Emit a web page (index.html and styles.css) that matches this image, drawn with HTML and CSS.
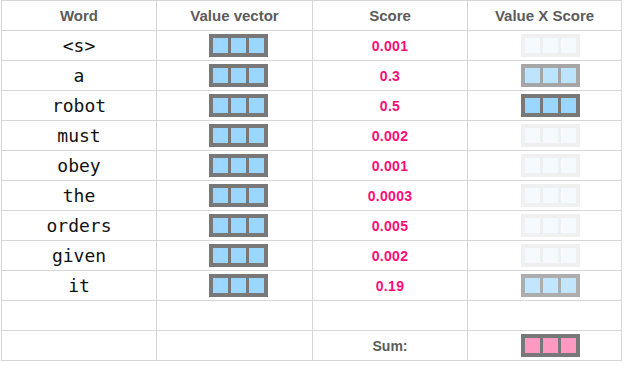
FILE: index.html
```html
<!DOCTYPE html>
<html>
<head>
<meta charset="utf-8">
<link rel="stylesheet" href="styles.css">
</head>
<body>
<div class="table">
  <div class="cell head">Word</div>
  <div class="cell head">Value vector</div>
  <div class="cell head">Score</div>
  <div class="cell head">Value X Score</div>

  <div class="cell word">&lt;s&gt;</div>
  <div class="cell vec"><div class="box"><i></i><i></i><i></i></div></div>
  <div class="cell score">0.001</div>
  <div class="cell vxs"><div class="box" style="opacity:0.1"><i></i><i></i><i></i></div></div>

  <div class="cell word">a</div>
  <div class="cell vec"><div class="box"><i></i><i></i><i></i></div></div>
  <div class="cell score">0.3</div>
  <div class="cell vxs"><div class="box" style="opacity:0.65"><i></i><i></i><i></i></div></div>

  <div class="cell word">robot</div>
  <div class="cell vec"><div class="box"><i></i><i></i><i></i></div></div>
  <div class="cell score">0.5</div>
  <div class="cell vxs"><div class="box" style="opacity:1"><i></i><i></i><i></i></div></div>

  <div class="cell word">must</div>
  <div class="cell vec"><div class="box"><i></i><i></i><i></i></div></div>
  <div class="cell score">0.002</div>
  <div class="cell vxs"><div class="box" style="opacity:0.1"><i></i><i></i><i></i></div></div>

  <div class="cell word">obey</div>
  <div class="cell vec"><div class="box"><i></i><i></i><i></i></div></div>
  <div class="cell score">0.001</div>
  <div class="cell vxs"><div class="box" style="opacity:0.1"><i></i><i></i><i></i></div></div>

  <div class="cell word">the</div>
  <div class="cell vec"><div class="box"><i></i><i></i><i></i></div></div>
  <div class="cell score">0.0003</div>
  <div class="cell vxs"><div class="box" style="opacity:0.1"><i></i><i></i><i></i></div></div>

  <div class="cell word">orders</div>
  <div class="cell vec"><div class="box"><i></i><i></i><i></i></div></div>
  <div class="cell score">0.005</div>
  <div class="cell vxs"><div class="box" style="opacity:0.1"><i></i><i></i><i></i></div></div>

  <div class="cell word">given</div>
  <div class="cell vec"><div class="box"><i></i><i></i><i></i></div></div>
  <div class="cell score">0.002</div>
  <div class="cell vxs"><div class="box" style="opacity:0.1"><i></i><i></i><i></i></div></div>

  <div class="cell word">it</div>
  <div class="cell vec"><div class="box"><i></i><i></i><i></i></div></div>
  <div class="cell score">0.19</div>
  <div class="cell vxs"><div class="box" style="opacity:0.6"><i></i><i></i><i></i></div></div>

  <div class="cell"></div>
  <div class="cell"></div>
  <div class="cell"></div>
  <div class="cell"></div>

  <div class="cell"></div>
  <div class="cell"></div>
  <div class="cell sum">Sum:</div>
  <div class="cell vxs"><div class="box pink"><i></i><i></i><i></i></div></div>
</div>
</body>
</html>
```

FILE: styles.css
```css
html, body {
  margin: 0;
  padding: 0;
  background: #fff;
}
body {
  padding-left: 1px;
}
.table {
  display: grid;
  grid-template-columns: 155px 156px 155px 154px;
  grid-auto-rows: 30px;
  width: 620px;
  border-top: 1px solid #d6d6d6;
  border-left: 1px solid #d6d6d6;
}
.cell {
  border-right: 1px solid #d6d6d6;
  border-bottom: 1px solid #d6d6d6;
  display: flex;
  align-items: center;
  justify-content: center;
  font-family: "Liberation Sans", Arial, sans-serif;
}
.head {
  font-size: 15px;
  font-weight: bold;
  color: #5c5c5c;
}
.word {
  font-family: "DejaVu Sans Mono", monospace;
  font-size: 18px;
  color: #111;
}
.score {
  font-size: 14px;
  font-weight: bold;
  color: #ff0a78;
  letter-spacing: 0.3px;
}
.sum {
  font-size: 14px;
  font-weight: bold;
  color: #5c5c5c;
}
.vec {
  padding-left: 7px;
}
.vxs {
  padding-left: 11px;
}
.box {
  display: flex;
  gap: 3px;
  padding: 4px;
  background: #787878;
}
.box i {
  display: block;
  width: 15px;
  height: 15px;
  background: #9ad6ff;
}
.box.pink i {
  background: #ff99c2;
}
```
